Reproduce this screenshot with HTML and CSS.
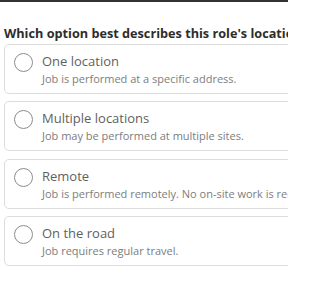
FILE: index.html
```html
<!DOCTYPE html>
<html>
<head>
<meta charset="utf-8">
<link rel="stylesheet" href="styles.css">
</head>
<body>
<div class="frame">
  <div class="topbar"></div>
  <div class="page">
    <h2 class="question">Which option best describes this role's location?</h2>
    <div class="options">
      <label class="option">
        <span class="radio"></span>
        <span class="text">
          <span class="title">One location</span>
          <span class="desc">Job is performed at a specific address.</span>
        </span>
      </label>
      <label class="option">
        <span class="radio"></span>
        <span class="text">
          <span class="title">Multiple locations</span>
          <span class="desc">Job may be performed at multiple sites.</span>
        </span>
      </label>
      <label class="option">
        <span class="radio"></span>
        <span class="text">
          <span class="title">Remote</span>
          <span class="desc">Job is performed remotely. No on-site work is required.</span>
        </span>
      </label>
      <label class="option">
        <span class="radio"></span>
        <span class="text">
          <span class="title">On the road</span>
          <span class="desc">Job requires regular travel.</span>
        </span>
      </label>
    </div>
  </div>
</div>
</body>
</html>
```
FILE: styles.css
```css
html, body {
  margin: 0;
  padding: 0;
  background: #fff;
}
body {
  font-family: "Open Sans", "Noto Sans", sans-serif;
}
.frame {
  width: 288px;
  height: 288px;
  overflow: hidden;
}
.topbar {
  height: 2px;
  background: #333;
}
.page {
  width: 340px;
  padding-left: 4px;
}
.question {
  margin: 22px 0 0 0;
  font-size: 12.7px;
  font-weight: 700;
  color: #2d2d2d;
  white-space: nowrap;
  line-height: 18px;
}
.options {
  display: flex;
  flex-direction: column;
  gap: 7.3px;
  margin-top: 2px;
}
.option {
  box-sizing: border-box;
  display: flex;
  align-items: flex-start;
  gap: 9px;
  border: 1px solid #dcdcdc;
  border-radius: 5px;
  padding: 7px 8px 0 9px;
  height: 50px;
}
.radio {
  flex: none;
  box-sizing: border-box;
  width: 19px;
  height: 19px;
  border: 1.5px solid #8c8c8c;
  border-radius: 50%;
  margin-top: 1px;
}
.text {
  display: flex;
  flex-direction: column;
  white-space: nowrap;
}
.title {
  font-size: 13px;
  line-height: 19px;
  color: #5f5f5f;
}
.desc {
  font-size: 11px;
  line-height: 16px;
  color: #7d7d7d;
}
```
